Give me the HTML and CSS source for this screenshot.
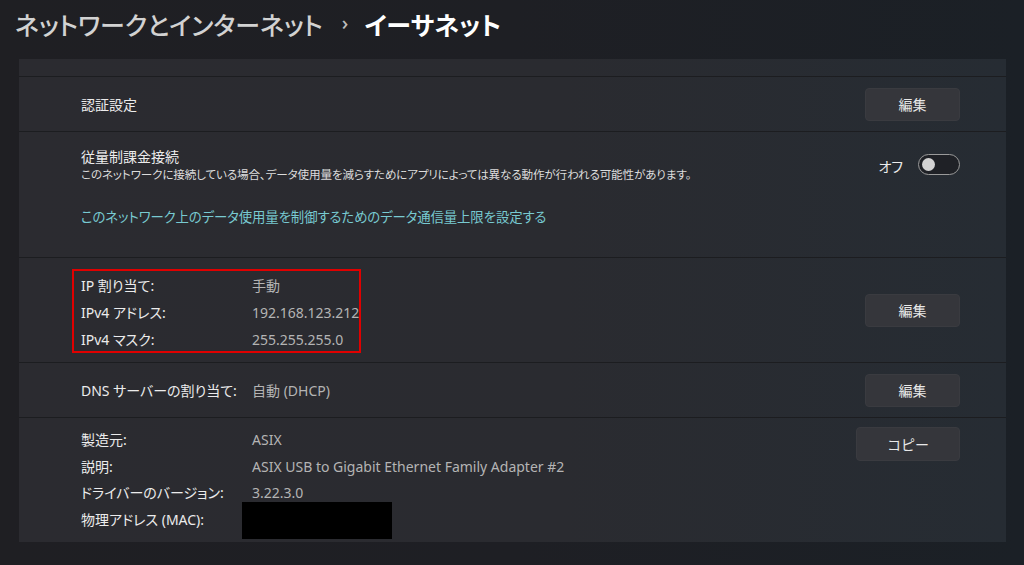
FILE: index.html
```html
<!DOCTYPE html>
<html lang="ja">
  <head>
    <meta charset="UTF-8" />
    <meta name="viewport" content="width=device-width, initial-scale=1.0" />
    <title>イーサネット</title>
    <link rel="stylesheet" href="styles.css">
  </head>

  <body>
    <div class="page">
      <h1 class="crumbs">
        <span class="crumb-parent">ネットワークとインターネット</span>
        <span class="crumb-sep">&#x203A;</span>
        <span class="crumb-current">イーサネット</span>
      </h1>

      <div class="card">
        <div class="row strip"></div>

        <div class="row row-auth">
          <span class="label">認証設定</span>
          <button class="btn">編集</button>
        </div>

        <div class="row row-metered">
          <div class="metered-top">
            <div class="metered-text">
              <div class="label">従量制課金接続</div>
              <div class="desc">このネットワークに接続している場合、データ使用量を減らすためにアプリによっては異なる動作が行われる可能性があります。</div>
            </div>
            <div class="toggle-wrap">
              <span class="toggle-label">オフ</span>
              <span class="toggle"><span class="knob"></span></span>
            </div>
          </div>
          <a class="link" href="#">このネットワーク上のデータ使用量を制御するためのデータ通信量上限を設定する</a>
        </div>

        <div class="row row-ip">
          <div class="props highlight">
            <span class="label">IP 割り当て:</span><span class="value">手動</span>
            <span class="label">IPv4 アドレス:</span><span class="value">192.168.123.212</span>
            <span class="label">IPv4 マスク:</span><span class="value">255.255.255.0</span>
          </div>
          <button class="btn">編集</button>
        </div>

        <div class="row row-dns">
          <div class="props">
            <span class="label">DNS サーバーの割り当て:</span><span class="value">自動 (DHCP)</span>
          </div>
          <button class="btn">編集</button>
        </div>

        <div class="row row-info">
          <div class="props info">
            <span class="label">製造元:</span><span class="value">ASIX</span>
            <span class="label">説明:</span><span class="value">ASIX USB to Gigabit Ethernet Family Adapter #2</span>
            <span class="label">ドライバーのバージョン:</span><span class="value">3.22.3.0</span>
            <span class="label">物理アドレス (MAC):</span><span class="redact"></span>
          </div>
          <button class="btn btn-wide">コピー</button>
        </div>
      </div>
    </div>
  </body>
</html>
```

FILE: styles.css
```css
html,
body {
  margin: 0;
  height: 100%;
}

body {
  background: linear-gradient(90deg, #1f1f23 0%, #1e1f24 50%, #1b2026 100%);
  font-family: "Noto Sans", "Noto Sans CJK JP", sans-serif;
  font-feature-settings: "palt";
  color: #e8e8e8;
  overflow: hidden;
}

.page {
  padding: 0 18px 0 19px;
}

.crumbs {
  margin: 0 0 0 -4px;
  height: 59px;
  display: flex;
  align-items: center;
  padding-bottom: 12px;
  box-sizing: border-box;
  font-size: 25px;
  font-weight: 500;
  white-space: nowrap;
}

.crumb-parent {
  color: #d2d2d2;
}

.crumb-sep {
  color: #bdbdbd;
  font-size: 20px;
  margin: 0 16px 0 19px;
  position: relative;
  top: -1px;
}

.crumb-current {
  color: #ffffff;
  font-weight: 700;
}

.card {
  width: 987px;
  display: flex;
  flex-direction: column;
  gap: 1px;
  background: #1c1d20;
}

.row {
  background: linear-gradient(90deg, #2b2b30 0%, #2a2b30 55%, #262c33 100%);
  padding: 0 46px 0 62px;
  box-sizing: border-box;
  display: flex;
  align-items: center;
  justify-content: space-between;
  font-size: 14px;
}

.strip {
  height: 17px;
}

.row-auth {
  height: 54px;
}

.row-metered {
  height: 125px;
  flex-direction: column;
  align-items: stretch;
  justify-content: flex-start;
  padding-top: 16px;
}

.row-ip {
  height: 104px;
}

.row-dns {
  height: 54px;
}

.row-info {
  height: 124px;
  align-items: flex-start;
  padding-top: 9px;
}

.label {
  color: #ececec;
}

.value {
  color: #b4b4b4;
}

.desc {
  font-size: 11.6px;
  color: #dcdcdc;
  line-height: 17px;
  letter-spacing: -0.15px;
}

.metered-top {
  display: flex;
  justify-content: space-between;
  align-items: center;
}

.metered-text .label {
  line-height: 18px;
}

.toggle-wrap {
  display: flex;
  align-items: center;
  gap: 15px;
}

.toggle-label {
  font-size: 14px;
  color: #ececec;
}

.toggle {
  width: 42px;
  height: 21px;
  box-sizing: border-box;
  border: 1.5px solid #9a9a9a;
  border-radius: 11px;
  background: #1f2126;
  display: flex;
  align-items: center;
  padding-left: 3px;
  margin-top: -3px;
}

.knob {
  width: 13px;
  height: 13px;
  border-radius: 50%;
  background: #d3d3d3;
}

.link {
  color: #78cad1;
  text-decoration: none;
  margin-top: 23px;
  font-size: 13.4px;
  letter-spacing: -0.1px;
}

.props {
  display: grid;
  grid-template-columns: 171px auto;
  align-items: center;
  line-height: 27px;
}

.highlight {
  border: 2px solid #e00000;
  margin-left: -9px;
  padding: 1px 4px 0 7px;
  width: 289px;
  height: 84px;
  box-sizing: border-box;
  align-self: center;
  margin-top: 2px;
}

.info {
  line-height: 26.7px;
}

.redact {
  display: block;
  width: 150px;
  height: 37px;
  background: #000000;
  margin: -5px 0 -5px -10px;
}

.btn {
  width: 95px;
  height: 33px;
  border: 1px solid #3a3b40;
  border-radius: 4px;
  background: #35363b;
  color: #e8e8e8;
  font-family: "Noto Sans", "Noto Sans CJK JP", sans-serif;
  font-size: 14px;
  cursor: pointer;
}

.btn-wide {
  width: 104px;
  height: 34px;
}
```
